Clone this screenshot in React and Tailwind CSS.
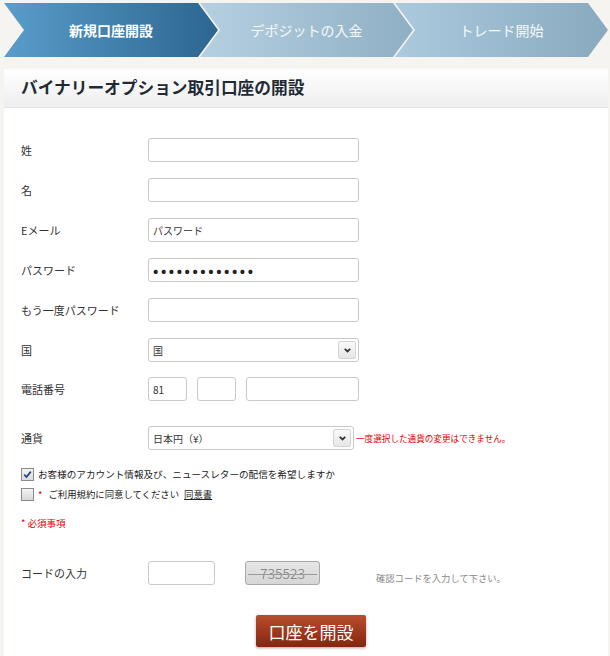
const font = { fontFamily: '"Noto Sans CJK JP", "Noto Sans", sans-serif' };

const steps = [
  { label: '新規口座開設', cls: 'from-[#5a9dcb] to-[#2c6690] text-white font-bold' },
  { label: 'デポジットの入金', cls: 'from-[#b6d0e1] to-[#8fafc4] text-white/90' },
  { label: 'トレード開始', cls: 'from-[#abcade] to-[#89a9be] text-white/90' },
];

const Chevron = () => (
  <svg width="7" height="5" viewBox="0 0 7 5">
    <path d="M0.8 0.8 L3.5 3.5 L6.2 0.8" fill="none" stroke="#333" strokeWidth="1.8" />
  </svg>
);

const Input = ({ w = 'w-[211px]', children }) => (
  <div className={`${w} h-6 border border-[#c9c9c9] rounded-[3px] bg-white flex items-center px-1 text-[10px] text-[#333]`}>
    {children}
  </div>
);

const Select = ({ w = 'w-[211px]', value }) => (
  <div className={`${w} h-6 border border-[#c9c9c9] rounded-[3px] bg-white flex items-center pl-1 pr-[2px] text-[10px] text-[#333]`}>
    <span className="flex-1">{value}</span>
    <span className="w-[18px] h-[18px] border border-[#d4d4d4] rounded-[2px] bg-gradient-to-b from-[#fafafa] to-[#e6e6e6] flex items-center justify-center">
      <Chevron />
    </span>
  </div>
);

const Row = ({ label, children, cls = 'mb-4' }) => (
  <div className={`flex items-center h-6 ${cls}`}>
    <div className="w-[127px] text-[11px] text-[#333]">{label}</div>
    {children}
  </div>
);

export default function App() {
  return (
    <div className="w-[610px] h-[656px] bg-[#f6f4f0] overflow-hidden pt-[3px]" style={font}>
      <div className="flex h-[54px] pl-[4px]">
        {steps.map((s, i) => (
          <div
            key={i}
            className={`${i === 0 ? 'w-[214px]' : 'w-[213px] -ml-[18px]'} h-full bg-gradient-to-r ${s.cls} flex items-center justify-center text-[14px] [clip-path:polygon(0_0,calc(100%_-_20px)_0,100%_50%,calc(100%_-_20px)_100%,0_100%,20px_50%)]`}
          >
            {s.label}
          </div>
        ))}
      </div>

      <div className="mt-[12px] ml-[4px] mr-[2px] bg-white h-[600px]">
        <div className="h-[39px] bg-gradient-to-b from-white to-[#eeeeee] border-b border-[#e4e4e4] flex items-center pl-[17px]">
          <h1 className="text-[16.7px] font-bold text-[#1f2a35]">バイナリーオプション取引口座の開設</h1>
        </div>

        <div className="pl-[17px] pt-[30px]">
          <Row label="姓"><Input /></Row>
          <Row label="名"><Input /></Row>
          <Row label="Eメール"><Input>パスワード</Input></Row>
          <Row label="パスワード">
            <Input><span className="text-[14px] font-bold tracking-[2.6px] leading-none text-[#222]">•••••••••••••</span></Input>
          </Row>
          <Row label="もう一度パスワード"><Input /></Row>
          <Row label="国" cls="mb-[15px]"><Select value="国" /></Row>
          <Row label="電話番号" cls="mb-[25px]">
            <div className="flex gap-[10px]">
              <Input w="w-[39px]">81</Input>
              <Input w="w-[39px]" />
              <Input w="w-[113px]" />
            </div>
          </Row>
          <Row label="通貨" cls="mb-[17px]">
            <Select w="w-[206px]" value="日本円（¥）" />
            <span className="ml-[2px] text-[8.6px] text-[#e00000]">一度選択した通貨の変更はできません。</span>
          </Row>

          <div className="flex items-center gap-[4px] h-[14px] text-[9.6px] text-[#222]">
            <span className="w-[13px] h-[13px] border border-[#8a8a8a] bg-gradient-to-b from-[#f4f4f4] to-[#dcdcdc] flex items-center justify-center">
              <svg width="9" height="9" viewBox="0 0 9 9">
                <path d="M1.2 4.6 L3.5 7 L7.8 1.6" fill="none" stroke="#24427f" strokeWidth="1.7" />
              </svg>
            </span>
            お客様のアカウント情報及び、ニュースレターの配信を希望しますか
          </div>
          <div className="flex items-center h-[14px] mt-[6px] text-[9.4px] text-[#222]">
            <span className="w-[13px] h-[13px] border border-[#8a8a8a] bg-gradient-to-b from-[#f4f4f4] to-[#d6d6d6]" />
            <span className="text-[#e00000] ml-[4px] mr-[6px]">*</span>
            ご利用規約に同意してください
            <span className="ml-[5px] underline">同意書</span>
          </div>
          <div className="mt-[15px] text-[9.5px] text-[#e00000]">* 必須事項</div>

          <div className="flex items-center h-6 mt-[31px]">
            <div className="w-[127px] text-[11px] text-[#333]">コードの入力</div>
            <Input w="w-[67px]" />
            <div className="ml-[30px] w-[75px] h-6 border border-[#a9a9a9] rounded-[3px] bg-gradient-to-b from-[#e6e6e6] to-[#d6d6d6] relative flex items-center justify-center text-[14px] text-[#7a7a7a] font-light">
              735523
              <span className="absolute left-[2px] right-[2px] top-[12px] h-px bg-[#9a9a9a]" />
            </div>
            <div className="ml-[56px] mt-[12px] text-[9.3px] text-[#888]">確認コードを入力して下さい。</div>
          </div>

          <div className="mt-[30px] ml-[235px]">
            <button className="w-[110px] h-[32px] rounded-[2px] bg-gradient-to-b from-[#b94d2e] to-[#84260f] text-white text-[17px] shadow-[0_1px_3px_rgba(0,0,0,0.35)]">
              口座を開設
            </button>
          </div>
        </div>
      </div>
    </div>
  );
}
